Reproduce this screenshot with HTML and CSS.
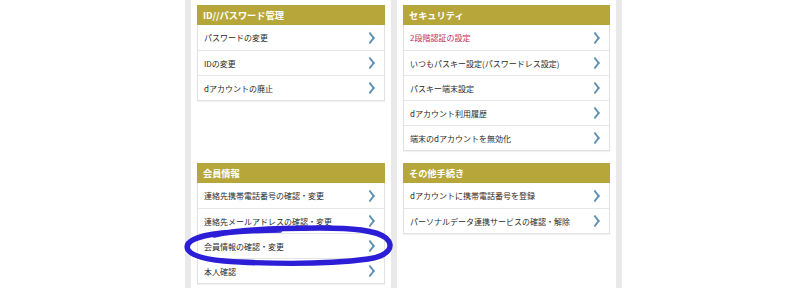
FILE: index.html
```html
<!DOCTYPE html>
<html lang="ja">
<head>
<meta charset="utf-8">
<title>dアカウント設定</title>
<link rel="stylesheet" href="styles.css">
</head>
<body>
<div class="board">
  <div class="cell cell-top">
    <section class="card">
      <h2 class="card-head">ID//パスワード管理</h2>
      <a class="row">パスワードの変更<span class="chev"></span></a>
      <a class="row">IDの変更<span class="chev"></span></a>
      <a class="row">dアカウントの廃止<span class="chev"></span></a>
    </section>
  </div>
  <div class="cell cell-top">
    <section class="card">
      <h2 class="card-head">セキュリティ</h2>
      <a class="row row-alert">2段階認証の設定<span class="chev"></span></a>
      <a class="row">いつもパスキー設定(パスワードレス設定)<span class="chev"></span></a>
      <a class="row">パスキー端末設定<span class="chev"></span></a>
      <a class="row">dアカウント利用履歴<span class="chev"></span></a>
      <a class="row">端末のdアカウントを無効化<span class="chev"></span></a>
    </section>
  </div>
  <div class="cell">
    <section class="card">
      <h2 class="card-head">会員情報</h2>
      <a class="row">連絡先携帯電話番号の確認・変更<span class="chev"></span></a>
      <a class="row">連絡先メールアドレスの確認・変更<span class="chev"></span></a>
      <a class="row">会員情報の確認・変更<span class="chev"></span></a>
      <a class="row">本人確認<span class="chev"></span></a>
    </section>
  </div>
  <div class="cell">
    <section class="card">
      <h2 class="card-head">その他手続き</h2>
      <a class="row">dアカウントに携帯電話番号を登録<span class="chev"></span></a>
      <a class="row">パーソナルデータ連携サービスの確認・解除<span class="chev"></span></a>
    </section>
  </div>
</div>
<svg class="marker" width="800" height="288" viewBox="0 0 800 288" aria-hidden="true">
  <path d="M 214 235 C 240 229, 280 228, 320 228 C 352 228, 376 230, 386 238 C 395 246, 389 256, 368 259 C 330 264, 280 264, 240 262 C 214 261, 194 258, 188 250 C 184 242, 195 236, 222 233 C 245 231, 262 230, 280 230"
        fill="none" stroke="#2c1ed6" stroke-width="5.4" stroke-linecap="round" stroke-linejoin="round"/>
</svg>
</body>
</html>
```
FILE: styles.css
```css
html, body {
  margin: 0;
  padding: 0;
  background: #ffffff;
}
body {
  position: relative;
  width: 800px;
  height: 288px;
  overflow: hidden;
  font-family: "Noto Sans CJK JP", "Noto Sans", "Liberation Sans", sans-serif;
}
.board {
  margin-left: 185px;
  width: 437px;
  box-sizing: border-box;
  min-height: 288px;
  background: #e9e9e9;
  padding: 0 6px;
  display: grid;
  grid-template-columns: 200px 219px;
  grid-template-rows: auto 1fr;
  column-gap: 6px;
}
.cell {
  background: #ffffff;
  padding: 0 6px 0 6px;
}
.cell-top {
  padding-top: 5px;
  padding-bottom: 12px;
}
.card {
  border: 1px solid #e2e2e2;
  border-top: none;
  box-shadow: 0 1px 1px rgba(0,0,0,0.05);
  background: #fff;
}
.card-head {
  margin: 0 -1px;
  height: 20px;
  line-height: 20px;
  background: #b7a73b;
  color: #ffffff;
  font-size: 9.2px;
  font-weight: bold;
  padding: 0 6px;
}
.row {
  display: flex;
  align-items: center;
  justify-content: space-between;
  height: 24px;
  padding: 0 6px;
  border-top: 1px solid #e6e6e6;
  font-size: 8px;
  color: #2a2a2a;
  text-decoration: none;
}
.card-head + .row {
  border-top: none;
  height: 25px;
}
.row-alert {
  color: #c02c58;
}
.chev {
  width: 6px;
  height: 6px;
  border-top: 2px solid #5d8fb4;
  border-right: 2px solid #5d8fb4;
  transform: scale(0.85, 1.1) rotate(45deg);
  margin-right: 4px;
}
.marker {
  position: absolute;
  left: 0;
  top: 0;
  pointer-events: none;
}
```
